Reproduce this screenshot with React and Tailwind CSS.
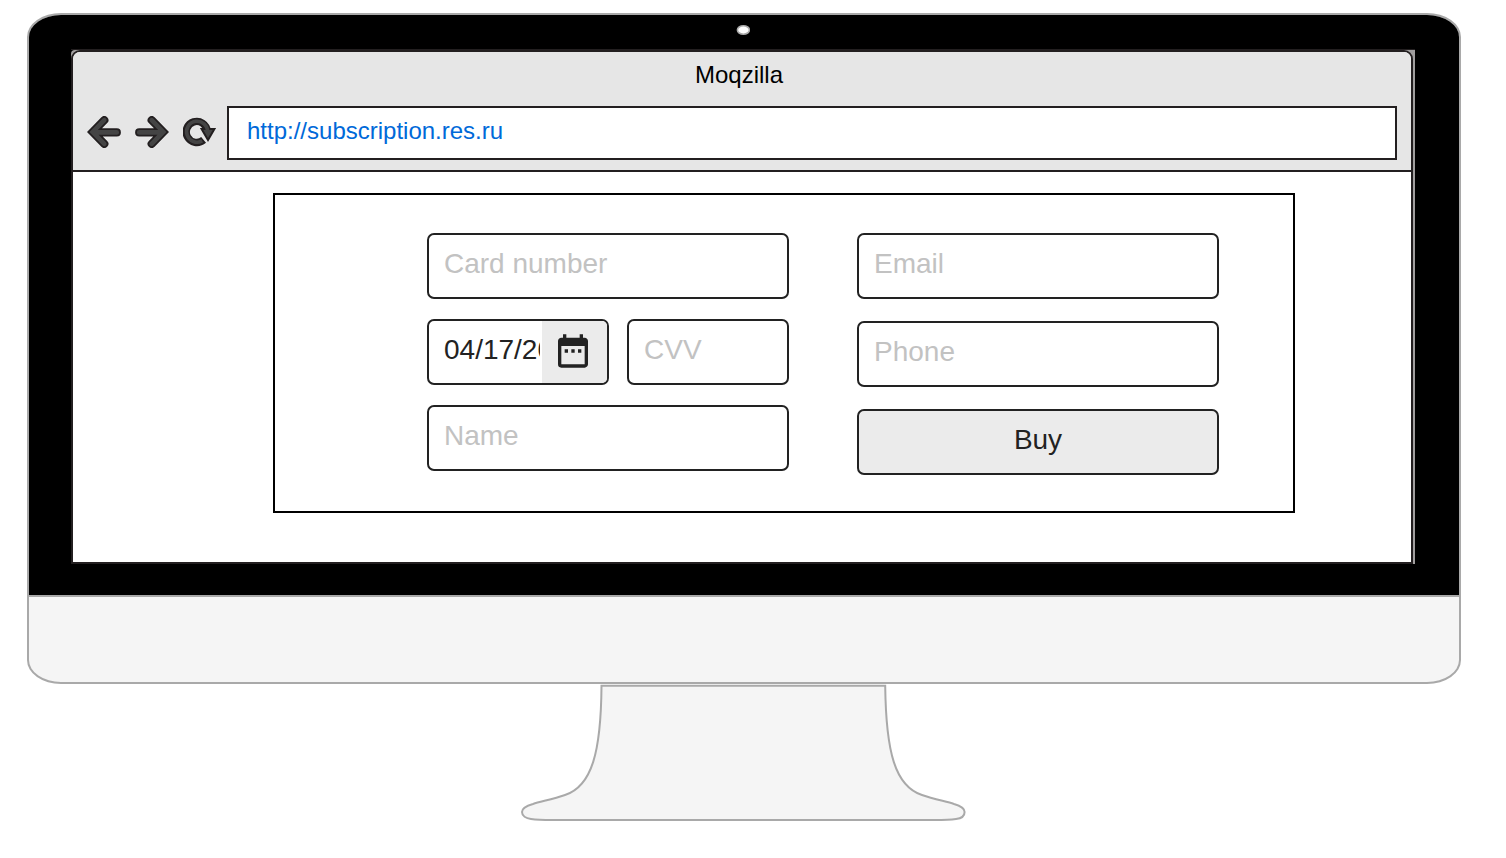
import { useState } from "react";
import { MdDateRange } from "react-icons/md";

function ArrowIcon({ className }) {
  const shape = "M17.3 4.2 L5.7 16 L17.3 27.8 M7 16.4 H29.8";
  return (
    <svg viewBox="0 0 34 32" className={className} fill="none" strokeLinecap="round" strokeLinejoin="miter" aria-hidden="true">
      <path d={shape} stroke="#231f20" strokeWidth="8.2" />
      <path d={shape} stroke="#444" strokeWidth="4.6" />
    </svg>
  );
}

function ReloadIcon() {
  return (
    <svg viewBox="0 0 34 32" className="h-8 w-[34px]" fill="none" aria-hidden="true">
      <g transform="translate(0 2)">
        <path d="M24.2 13 A10.5 10.5 0 1 0 20.6 21.9" stroke="#231f20" strokeWidth="7.4" />
        <path d="M18.6 11 H31.4 L25 22 Z" fill="#444" stroke="#231f20" strokeWidth="2" />
        <path d="M24.6 14 A10.5 10.5 0 1 0 19.2 22.9" stroke="#444" strokeWidth="3.6" />
      </g>
    </svg>
  );
}

const fieldBox = "h-[66px] w-full min-w-0 rounded-[7px] border-2 border-[#222] bg-white text-[28px]";
const fieldText = "px-[15px] pb-1 text-[#222] placeholder:text-[#c2c2c2] outline-none";

function Field({ label, type = "text" }) {
  return <input type={type} aria-label={label} placeholder={label} className={`${fieldBox} ${fieldText}`} />;
}

function DateField() {
  const [date, setDate] = useState("04/17/2023");
  return (
    <div className={`${fieldBox} flex overflow-hidden`}>
      <input
        type="text"
        aria-label="Expiry date"
        value={date}
        onChange={(e) => setDate(e.target.value)}
        className="min-w-0 flex-1 pr-0.5 pb-1 pl-[15px] text-[#222] outline-none"
      />
      <button type="button" aria-label="Pick a date" className="flex w-[65px] shrink-0 items-center justify-center bg-[#ebebeb] pr-1 pb-0.5 text-[#222]">
        <MdDateRange className="size-10" />
      </button>
    </div>
  );
}

function PaymentForm() {
  return (
    <form
      onSubmit={(e) => e.preventDefault()}
      className="mt-[21px] mr-[116px] mb-[49px] ml-[200px] grid grid-cols-2 gap-x-[68px] border-2 border-black pt-[38px] pr-[74px] pb-9 pl-[152px]"
    >
      <div className="flex flex-col gap-5">
        <Field label="Card number" />
        <div className="grid grid-cols-[182fr_162fr] gap-[18px]">
          <DateField />
          <Field label="CVV" />
        </div>
        <Field label="Name" />
      </div>
      <div className="flex flex-col gap-[22px]">
        <Field label="Email" type="email" />
        <Field label="Phone" type="tel" />
        <button type="submit" className="h-[66px] rounded-[7px] border-2 border-[#222] bg-[#ebebeb] pb-1 text-[28px] text-[#222]">
          Buy
        </button>
      </div>
    </form>
  );
}

function BrowserWindow() {
  const [url, setUrl] = useState("http://subscription.res.ru");
  return (
    <div className="overflow-hidden rounded-t-[9px] border-2 border-[#231f20] bg-white">
      <header className="border-b-2 border-[#231f20] bg-[#e6e6e6] pt-2 pb-2.5">
        <h1 className="pr-1.5 text-center text-2xl leading-[30px] text-black">Moqzilla</h1>
        <div className="mt-4 flex items-center pr-3.5 pl-3.5">
          <div className="mr-2.5 flex gap-3.5 pb-0.5">
            <button type="button" aria-label="Back">
              <ArrowIcon className="h-8 w-[34px]" />
            </button>
            <button type="button" aria-label="Forward">
              <ArrowIcon className="h-8 w-[34px] -scale-x-100" />
            </button>
            <button type="button" aria-label="Reload">
              <ReloadIcon />
            </button>
          </div>
          <input
            type="text"
            aria-label="Address"
            value={url}
            onChange={(e) => setUrl(e.target.value)}
            className="h-[54px] min-w-0 flex-1 border-2 border-[#231f20] bg-white px-[18px] pb-1 text-2xl text-[#0069d9] outline-none"
          />
        </div>
      </header>
      <main className="flow-root">
        <PaymentForm />
      </main>
    </div>
  );
}

function Stand() {
  return (
    <svg viewBox="520 684 448 140" className="mx-auto block w-[448px]" aria-hidden="true">
      <path
        d="M601.5 685.7 C601 752 592 786 565 795 C553 799 541 801.5 533 804 C526 806 522 808.5 522 812 C522 816 526 818.5 531 819 C538 820 545 820 552 820 H935 C942 820 949 820 956 819 C961 818.5 964.6 816 964.6 812 C964.6 808.5 961 806 954 804 C946 801.5 934 799 922 795 C895 786 886 752 885.2 685.7 Z"
        fill="#f5f5f5"
        stroke="#a9a9a9"
        strokeWidth="2"
      />
    </svg>
  );
}

export default function App() {
  return (
    <div className="min-h-screen bg-white pt-[13px] pr-[45px] pb-8 pl-[27px] font-['Liberation_Sans',Arial,sans-serif]">
      <div className="overflow-hidden rounded-[34px_/_24px] border-2 border-[#a9a9a9] bg-[#f5f5f5]">
        <div className="bg-black pr-11 pb-[31px] pl-[42px]">
          <div className="flex h-[34px] items-center justify-center pb-1">
            <svg viewBox="0 0 14 10" className="h-2.5 w-3.5" aria-hidden="true">
              <ellipse cx="7.4" cy="5" rx="6" ry="4.2" fill="#fff" stroke="#a9a9a9" strokeWidth="1.6" />
            </svg>
          </div>
          <div className="border-t border-[#231f20]">
            <div className="rounded-tl-sm bg-[#a09e9e] pr-0.5">
              <BrowserWindow />
            </div>
          </div>
        </div>
        <div className="h-[87px] border-t-2 border-[#a9a9a9]" />
      </div>
      <Stand />
    </div>
  );
}
